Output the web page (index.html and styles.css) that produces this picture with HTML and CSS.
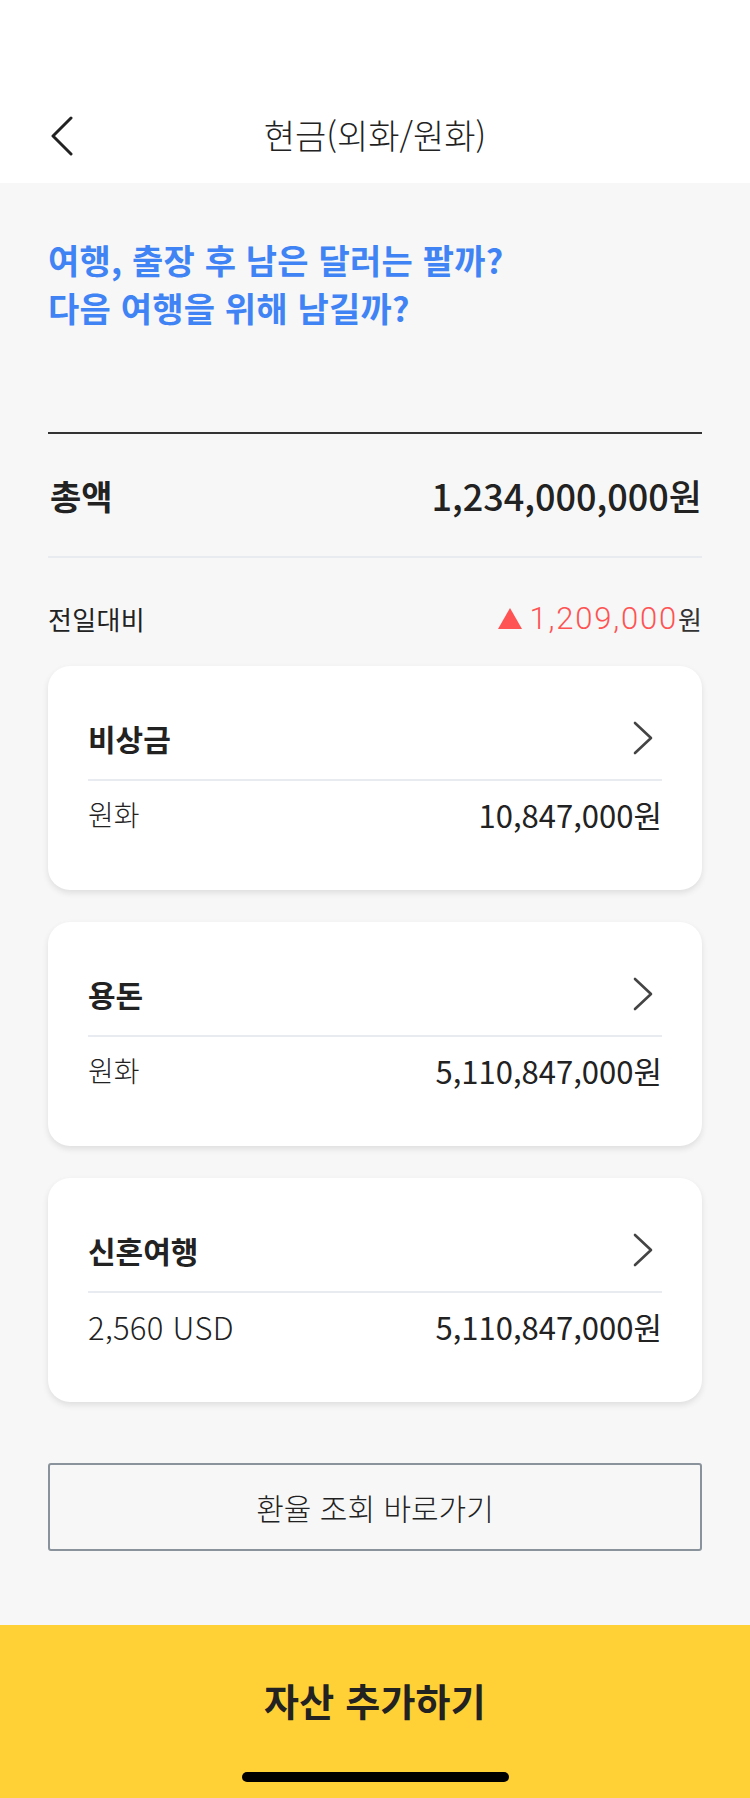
FILE: index.html
```html
<!DOCTYPE html>
<html lang="ko">
<head>
<meta charset="utf-8">
<link rel="stylesheet" href="styles.css">
</head>
<body>
<div class="page">
  <header class="header">
    <div class="nav">
      <button class="back" aria-label="뒤로">
        <svg width="24" height="40" viewBox="0 0 24 40"><path d="M21 2 L3 20 L21 38" fill="none" stroke="#222" stroke-width="3" stroke-linecap="round" stroke-linejoin="round"/></svg>
      </button>
      <h1 class="title">현금(외화/원화)</h1>
    </div>
  </header>
  <main class="main">
    <p class="question">여행, 출장 후 남은 달러는 팔까?<br>다음 여행을 위해 남길까?</p>
    <div class="total">
      <span class="total-label">총액</span>
      <span class="total-value">1,234,000,000원</span>
    </div>
    <div class="diff">
      <span class="diff-label">전일대비</span>
      <span class="diff-value"><svg class="tri" width="24" height="21" viewBox="0 0 24 21"><path d="M12 0 L24 21 L0 21 Z" fill="#ff5252"/></svg><span class="up">1,209,000</span>원</span>
    </div>
    <div class="cards">
      <div class="card">
        <div class="card-head">
          <span class="card-title">비상금</span>
          <svg class="chev" width="20" height="34" viewBox="0 0 20 34"><path d="M2 2 L18 17 L2 32" fill="none" stroke="#444" stroke-width="2.6" stroke-linecap="round" stroke-linejoin="round"/></svg>
        </div>
        <div class="card-row"><span class="cur">원화</span><span class="amt">10,847,000원</span></div>
      </div>
      <div class="card">
        <div class="card-head">
          <span class="card-title">용돈</span>
          <svg class="chev" width="20" height="34" viewBox="0 0 20 34"><path d="M2 2 L18 17 L2 32" fill="none" stroke="#444" stroke-width="2.6" stroke-linecap="round" stroke-linejoin="round"/></svg>
        </div>
        <div class="card-row"><span class="cur">원화</span><span class="amt">5,110,847,000원</span></div>
      </div>
      <div class="card">
        <div class="card-head">
          <span class="card-title">신혼여행</span>
          <svg class="chev" width="20" height="34" viewBox="0 0 20 34"><path d="M2 2 L18 17 L2 32" fill="none" stroke="#444" stroke-width="2.6" stroke-linecap="round" stroke-linejoin="round"/></svg>
        </div>
        <div class="card-row"><span class="cur latin">2,560 USD</span><span class="amt">5,110,847,000원</span></div>
      </div>
    </div>
    <button class="rate-btn">환율 조회 바로가기</button>
  </main>
  <footer class="footer">
    <button class="add-btn">자산 추가하기</button>
    <div class="home-ind"></div>
  </footer>
</div>
</body>
</html>
```

FILE: styles.css
```css
* { box-sizing: border-box; }
html, body { margin: 0; padding: 0; }
body {
  width: 750px;
  height: 1798px;
  background: #f7f7f7;
  font-family: "Noto Sans CJK KR", "Noto Sans", sans-serif;
  color: #222;
}
.page {
  display: flex;
  flex-direction: column;
  height: 1798px;
}
.header {
  background: #fff;
  padding-top: 90px;
}
.nav {
  height: 93px;
  display: flex;
  align-items: center;
  justify-content: center;
  position: relative;
}
.back {
  position: absolute;
  left: 50px;
  top: 26px;
  background: none;
  border: 0;
  padding: 0;
  display: flex;
}
.title {
  margin: 0 0 4px;
  font-size: 34px;
  font-weight: 300;
  letter-spacing: 0;
  color: #222;
}
.main {
  flex: 1;
  padding: 0 48px;
  display: flex;
  flex-direction: column;
}
.question {
  margin: 53px 0 0;
  font-size: 34px;
  line-height: 48px;
  font-weight: 700;
  letter-spacing: 0.2px;
  color: #3f83f5;
}
.total {
  margin-top: 100px;
  border-top: 2px solid #333;
  border-bottom: 2px solid #e8ecf0;
  height: 126px;
  display: flex;
  align-items: center;
  justify-content: space-between;
}
.total-label {
  font-size: 34px;
  font-weight: 700;
  letter-spacing: 0;
  padding-left: 2px;
}
.total-value {
  font-size: 36px;
  font-weight: 500;
  letter-spacing: 0;
}
.diff {
  height: 108px;
  display: flex;
  align-items: center;
  justify-content: space-between;
  padding-top: 12px;
}
.diff-label {
  font-size: 26px;
  font-weight: 400;
  letter-spacing: 0.3px;
}
.diff-value {
  display: flex;
  align-items: center;
  font-size: 26px;
  color: #333;
}
.tri { margin-right: 8px; }
.diff-value .up {
  font-family: "Roboto", sans-serif;
  font-weight: 300;
  font-size: 31px;
  color: #ff5252;
  letter-spacing: 1.8px;
}
.cards {
  display: flex;
  flex-direction: column;
  gap: 32px;
}
.card {
  background: #fff;
  border-radius: 22px;
  box-shadow: 0 3px 6px rgba(0,0,0,0.1);
  height: 224px;
  padding: 0 40px;
  display: flex;
  flex-direction: column;
}
.card-head {
  height: 115px;
  padding-top: 30px;
  display: flex;
  align-items: center;
  justify-content: space-between;
  border-bottom: 2px solid #e8ecf0;
}
.card-title {
  font-size: 30px;
  font-weight: 700;
  letter-spacing: 0;
}
.chev { margin-right: 9px; }
.card-row {
  height: 66px;
  display: flex;
  align-items: center;
  justify-content: space-between;
}
.cur {
  font-size: 28px;
  font-weight: 300;
  letter-spacing: 0;
}
.cur.latin {
  font-size: 31px;
  letter-spacing: 0.3px;
}
.amt {
  font-size: 31px;
  font-weight: 400;
  letter-spacing: 0;
}
.rate-btn {
  margin-top: 61px;
  height: 88px;
  width: 100%;
  background: #f7f7f7;
  border: 2px solid #8a939c;
  border-radius: 3px;
  font-family: inherit;
  font-size: 30px;
  font-weight: 300;
  letter-spacing: 0;
  color: #222;
}
.footer {
  height: 173px;
  background: #ffd137;
  display: flex;
  flex-direction: column;
  align-items: center;
}
.add-btn {
  margin-top: 46px;
  background: none;
  border: 0;
  font-family: inherit;
  font-size: 38px;
  font-weight: 700;
  letter-spacing: 0.2px;
  color: #222;
  height: 52px;
}
.home-ind {
  margin-top: 49px;
  width: 267px;
  height: 10px;
  border-radius: 5px;
  background: #000;
}
```
